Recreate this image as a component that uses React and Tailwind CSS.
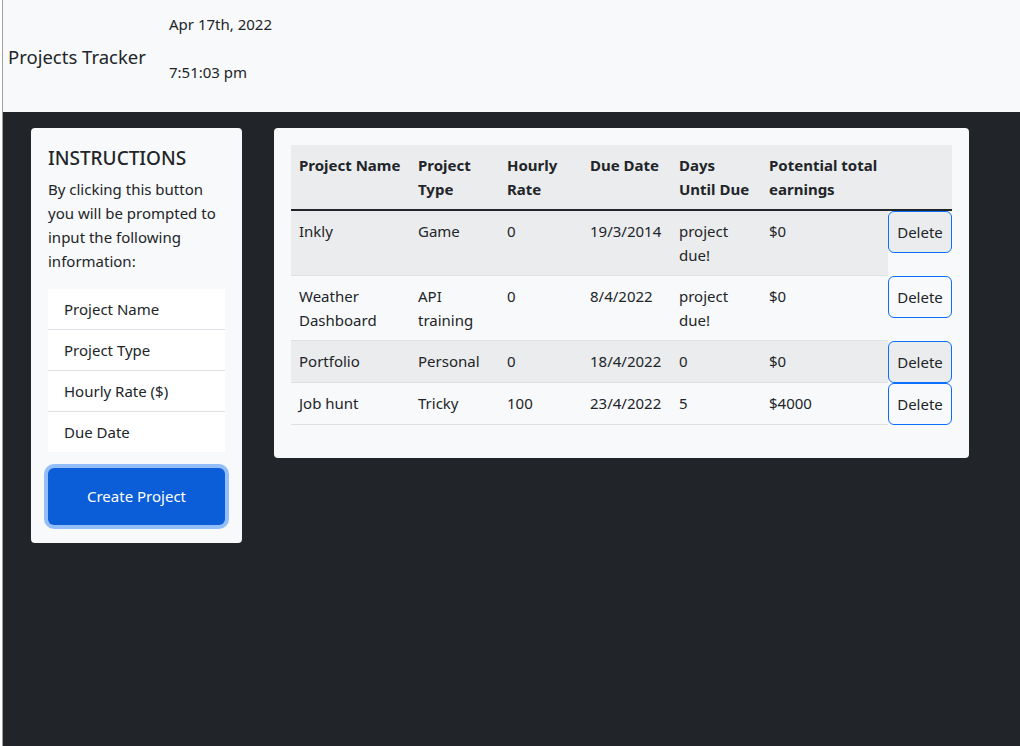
const projects = [
  { name: 'Inkly', type: 'Game', rate: '0', due: '19/3/2014', days: 'project due!', earnings: '$0' },
  { name: 'Weather Dashboard', type: 'API training', rate: '0', due: '8/4/2022', days: 'project due!', earnings: '$0' },
  { name: 'Portfolio', type: 'Personal', rate: '0', due: '18/4/2022', days: '0', earnings: '$0' },
  { name: 'Job hunt', type: 'Tricky', rate: '100', due: '23/4/2022', days: '5', earnings: '$4000' },
];

const fields = ['Project Name', 'Project Type', 'Hourly Rate ($)', 'Due Date'];

function Header() {
  return (
    <header className="flex h-[112px] bg-[#f8f9fa]">
      <h1 className="w-[166px] self-center pt-[2px] pl-[5px] text-[18.5px] leading-[30px] font-normal">Projects Tracker</h1>
      <div className="flex flex-col gap-6 pt-[12px]">
        <p className="leading-6">Apr 17th, 2022</p>
        <p className="leading-6">7:51:03 pm</p>
      </div>
    </header>
  );
}

function Instructions() {
  return (
    <aside className="w-[211px] shrink-0 rounded bg-[#f8f9fa] px-[17px] pt-[18px] pb-[18px]">
      <h5 className="mb-[7px] text-[19px] leading-6 font-medium uppercase">Instructions</h5>
      <p className="leading-6">By clicking this button you will be prompted to input the following information:</p>
      <ul className="mt-4 bg-white">
        {fields.map((f, i) => (
          <li
            key={f}
            className={i < fields.length - 1 ? 'h-[41px] border-b border-[#dee2e6] px-4 leading-[40px]' : 'h-[40px] px-4 leading-[40px]'}
          >
            {f}
          </li>
        ))}
      </ul>
      <button className="mt-4 h-[57px] w-full rounded-md bg-[#0b5ed7] text-white ring-4 ring-[#94befa]">
        Create Project
      </button>
    </aside>
  );
}

function ProjectTable() {
  return (
    <section className="w-[695px] rounded bg-[#f8f9fa] px-[17px] pt-[17px] pb-[33px]">
      <table className="w-[661px] table-fixed border-collapse text-left">
        <colgroup>
          <col className="w-[119px]" />
          <col className="w-[89px]" />
          <col className="w-[83px]" />
          <col className="w-[89px]" />
          <col className="w-[90px]" />
          <col className="w-[127px]" />
          <col className="w-[64px]" />
        </colgroup>
        <thead className="bg-[#ebeced]">
          <tr className="border-b-2 border-[#212529]">
            <th className="p-2 align-top leading-6 font-bold whitespace-nowrap">Project Name</th>
            <th className="p-2 align-top leading-6 font-bold whitespace-nowrap">Project<br />Type</th>
            <th className="p-2 align-top leading-6 font-bold whitespace-nowrap">Hourly<br />Rate</th>
            <th className="p-2 align-top leading-6 font-bold whitespace-nowrap">Due Date</th>
            <th className="p-2 align-top leading-6 font-bold whitespace-nowrap">Days<br />Until Due</th>
            <th className="p-2 align-top leading-6 font-bold whitespace-nowrap">Potential total<br />earnings</th>
            <th></th>
          </tr>
        </thead>
        <tbody>
          {projects.map((p, i) => {
            const bg = i % 2 === 0 ? 'bg-[#ebeced]' : 'bg-[#f8f9fa]';
            return (
              <tr key={p.name}>
                <td className={`${bg} border-b border-[#dee2e6] p-2 align-top leading-6`}>{p.name}</td>
                <td className={`${bg} border-b border-[#dee2e6] p-2 align-top leading-6`}>{p.type}</td>
                <td className={`${bg} border-b border-[#dee2e6] p-2 align-top leading-6`}>{p.rate}</td>
                <td className={`${bg} border-b border-[#dee2e6] p-2 align-top leading-6`}>{p.due}</td>
                <td className={`${bg} border-b border-[#dee2e6] p-2 align-top leading-6`}>{p.days}</td>
                <td className={`${bg} border-b border-[#dee2e6] p-2 align-top leading-6`}>{p.earnings}</td>
                <td className="p-0 align-top">
                  <button className={`${bg} block h-[42px] w-[64px] rounded-md border border-[#0d6efd] leading-6`}>
                    Delete
                  </button>
                </td>
              </tr>
            );
          })}
        </tbody>
      </table>
    </section>
  );
}

export default function App() {
  return (
    <div className="flex min-h-screen font-['Noto_Sans',sans-serif] text-[15px] text-[#212529]">
      <div className="w-[3px] shrink-0 border-r border-[#a0a0a0] bg-white" />
      <div className="flex flex-1 flex-col">
        <Header />
        <main className="flex flex-1 items-start gap-8 bg-[#212529] pt-4 pl-[28px]">
          <Instructions />
          <ProjectTable />
        </main>
      </div>
    </div>
  );
}
